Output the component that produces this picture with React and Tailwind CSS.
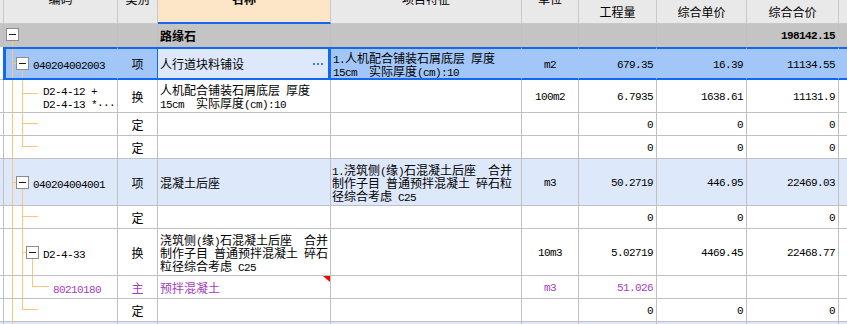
import React from 'react';

const O = '#fcc676';

function TreeArt() {
  const boxes = [
    [6.5, 28.5],
    [16.5, 57.5],
    [16.5, 176.5],
    [26.5, 246.5],
  ];
  return (
    <>
      <path
        d="M12.5 40V340 M12 63.5H16 M22.5 69V147 M22 93.5H38 M22 123.5H38 M22 146.5H38 M12 182.5H16 M22.5 188V310 M22 216.5H38 M22 252.5H26 M32.5 258V287 M32 286.5H49 M22 309.5H38"
        stroke={O}
        strokeWidth="1"
        fill="none"
      />
      {boxes.map(([x, y], i) => (
        <g key={i}>
          <rect x={x} y={y} width="12" height="12" fill="#fff" stroke="#8c8c8c" />
          <path d={`M${x + 2.5} ${y + 6}H${x + 9.5}`} stroke="#1a1a1a" />
        </g>
      ))}
    </>
  );
}

function Gutter({ x0, y0, w, h }) {
  return (
    <svg
      width={w}
      height={h}
      viewBox={`${x0} ${y0} ${w} ${h}`}
      className="block flex-none"
      shapeRendering="crispEdges"
    >
      <TreeArt />
    </svg>
  );
}

const ASCII = /^[\x20-\x7e\u00b7]+$/;
function T({ s }) {
  return s
    .split(/([\x20-\x7e\u00b7]+)/)
    .filter(Boolean)
    .map((p, i) =>
      ASCII.test(p) ? (
        <span
          key={i}
          className="font-['Liberation_Mono',monospace] text-[11px] tracking-[-0.6px] whitespace-pre"
        >
          {p}
        </span>
      ) : (
        <span key={i}>{p}</span>
      )
    );
}

function L({ lines, className = '' }) {
  return (
    <div className={className}>
      {lines.map((l, i) => (
        <div key={i} className="whitespace-nowrap h-[13px] leading-[13px]">
          <T s={l} />
        </div>
      ))}
    </div>
  );
}

const W = [
  'w-[4px]',
  'w-[114px]',
  'w-[40px]',
  'w-[173px]',
  'w-[191px]',
  'w-[57px]',
  'w-[78px]',
  'w-[90px]',
  'w-[92px]',
  'w-[40px]',
];

function Row({ h, bg = 'bg-white', cells, text = 'text-black' }) {
  return (
    <div className={`flex flex-none ${h} ${text}`}>
      {W.map((w, i) => (
        <div
          key={i}
          className={`${w} relative flex-none h-full flex items-center overflow-hidden border-r border-b border-[#c0c0c0] ${bg}`}
        >
          {cells[i]}
        </div>
      ))}
    </div>
  );
}

const C = ({ s }) => (
  <div className="w-full text-center">
    <T s={s} />
  </div>
);
const R = ({ s }) => (
  <div className="w-full text-right pr-[3px]">
    <T s={s} />
  </div>
);

function Code({ y0, h, w, lines }) {
  return (
    <>
      <Gutter x0={4} y0={y0} w={w} h={h} />
      {lines && <L lines={lines} />}
    </>
  );
}

const HC =
  'flex-none h-full border-r border-b border-[#c8c8c8] bg-[#e9e9e9] flex justify-center overflow-hidden';

function Header() {
  return (
    <div className="flex flex-none h-[24px] text-black">
      <div className={`${HC} w-[4px]`} />
      <div className={`${HC} w-[114px] items-start`}>
        <div className="-mt-[8px] leading-[13px]">编码</div>
      </div>
      <div className={`${HC} w-[40px] items-start`}>
        <div className="-mt-[8px] leading-[13px]">类别</div>
      </div>
      <div className="w-[173px] flex-none h-full border-r border-r-[#c8c8c8] border-b-2 border-b-[#1268f3] bg-[#fde6c7] flex justify-center items-start overflow-hidden">
        <div className="-mt-[8px] leading-[13px] font-bold">名称</div>
      </div>
      <div className={`${HC} w-[191px] items-start`}>
        <div className="-mt-[8px] leading-[13px]">项目特征</div>
      </div>
      <div className={`${HC} w-[57px] items-start`}>
        <div className="-mt-[8px] leading-[13px]">单位</div>
      </div>
      <div className={`${HC} w-[78px] items-center`}>
        <div className="leading-[13px]">工程量</div>
      </div>
      <div className={`${HC} w-[90px] items-center`}>
        <div className="leading-[13px]">综合单价</div>
      </div>
      <div className={`${HC} w-[92px] items-center`}>
        <div className="leading-[13px]">综合合价</div>
      </div>
      <div className={`${HC} w-[40px]`} />
    </div>
  );
}

const SELC =
  'flex-none h-full flex items-center overflow-hidden bg-[#a2c6f8] border-t-2 border-b-2 border-r border-t-[#1268f3] border-b-[#1268f3] border-r-[#a2c6f8]';

function SelectedRow() {
  return (
    <div className="flex flex-none h-[33px] text-black">
      <div className="w-[3px] flex-none h-full bg-white border-b border-[#c0c0c0]" />
      <div className="w-[115px] flex-none h-full flex items-center overflow-hidden bg-[#a2c6f8] border-t-2 border-b-2 border-l-[3px] border-r border-t-[#1268f3] border-b-[#1268f3] border-l-[#1268f3] border-r-[#a2c6f8]">
        <Gutter x0={6} y0={49} w={27} h={29} />
        <L lines={['040204002003']} />
      </div>
      <div className="w-[40px] flex-none h-full flex items-center overflow-hidden bg-[#a2c6f8] border-t-2 border-b-2 border-r border-[#1268f3]">
        <C s="项" />
      </div>
      <div className="w-[173px] flex-none h-full flex items-center overflow-hidden bg-[#dde8fb] border-t-2 border-b-2 border-r-[3px] border-[#1268f3]">
        <div className="flex w-full items-center justify-between pl-[2px] pr-[5px]">
          <L lines={['人行道块料铺设']} />
          <svg width="10" height="2" className="block">
            <rect x="0" y="0" width="2" height="2" fill="#3b82d6" />
            <rect x="4" y="0" width="2" height="2" fill="#3b82d6" />
            <rect x="8" y="0" width="2" height="2" fill="#3b82d6" />
          </svg>
        </div>
      </div>
      <div className={`${SELC} w-[191px]`}>
        <L className="pl-[2px]" lines={['1.人机配合铺装石屑底层 厚度', '15cm　实际厚度(cm):10']} />
      </div>
      <div className={`${SELC} w-[57px]`}>
        <C s="m2" />
      </div>
      <div className={`${SELC} w-[78px]`}>
        <R s="679.35" />
      </div>
      <div className={`${SELC} w-[90px]`}>
        <R s="16.39" />
      </div>
      <div className={`${SELC} w-[92px]`}>
        <R s="11134.55" />
      </div>
      <div className={`${SELC} w-[40px]`} />
    </div>
  );
}

function DingRow({ y0 }) {
  return (
    <Row
      h="h-[23px]"
      cells={[
        null,
        <Code y0={y0} h={22} w={113} />,
        <C s="定" />,
        null,
        null,
        null,
        <R s="0" />,
        <R s="0" />,
        <R s="0" />,
        null,
      ]}
    />
  );
}

export default function App() {
  return (
    <div className="w-[847px] h-[324px] overflow-hidden bg-white font-['Noto_Sans_CJK_SC',sans-serif] text-[12px] leading-[13px] flex flex-col">
      <Header />
      <Row
        h="h-[23px]"
        bg="bg-[#c4c4c4]"
        cells={[
          null,
          <Code y0={24} h={22} w={113} />,
          null,
          <div className="pl-[2px] font-bold">
            <T s="路缘石" />
          </div>,
          null,
          null,
          null,
          null,
          <div className="w-full text-right pr-[3px] font-bold">
            <T s="198142.15" />
          </div>,
          null,
        ]}
      />
      <SelectedRow />
      <Row
        h="h-[33px]"
        cells={[
          null,
          <Code y0={80} h={32} w={39} lines={['D2-4-12 +', 'D2-4-13 *···']} />,
          <C s="换" />,
          <L className="pl-[2px]" lines={['人机配合铺装石屑底层 厚度', '15cm　实际厚度(cm):10']} />,
          null,
          <C s="100m2" />,
          <R s="6.7935" />,
          <R s="1638.61" />,
          <R s="11131.9" />,
          null,
        ]}
      />
      <DingRow y0={113} />
      <DingRow y0={136} />
      <Row
        h="h-[47px]"
        bg="bg-[#dde8fb]"
        cells={[
          null,
          <Code y0={159} h={46} w={29} lines={['040204004001']} />,
          <C s="项" />,
          <L className="pl-[2px]" lines={['混凝土后座']} />,
          <L
            className="pl-[1px]"
            lines={['1.浇筑侧(缘)石混凝土后座　合并', '制作子目 普通预拌混凝土 碎石粒', '径综合考虑 C25']}
          />,
          <C s="m3" />,
          <R s="50.2719" />,
          <R s="446.95" />,
          <R s="22469.03" />,
          null,
        ]}
      />
      <DingRow y0={206} />
      <Row
        h="h-[47px]"
        cells={[
          null,
          <Code y0={229} h={46} w={39} lines={['D2-4-33']} />,
          <C s="换" />,
          <L
            className="pl-[2px]"
            lines={['浇筑侧(缘)石混凝土后座　合并', '制作子目 普通预拌混凝土 碎石', '粒径综合考虑 C25']}
          />,
          null,
          <C s="10m3" />,
          <R s="5.02719" />,
          <R s="4469.45" />,
          <R s="22468.77" />,
          null,
        ]}
      />
      <Row
        h="h-[23px]"
        text="text-[#a43cc4]"
        cells={[
          null,
          <Code y0={276} h={22} w={49} lines={['80210180']} />,
          <C s="主" />,
          <>
            <L className="pl-[2px]" lines={['预拌混凝土']} />
            <svg width="7" height="6" className="absolute top-0 right-0 block">
              <polygon points="0,0 7,0 7,6" fill="#ff0000" />
            </svg>
          </>,
          null,
          <C s="m3" />,
          <R s="51.026" />,
          null,
          null,
          null,
        ]}
      />
      <DingRow y0={299} />
      <Row
        h="h-[23px]"
        bg="bg-[#dde8fb]"
        cells={[null, <Code y0={322} h={22} w={113} />, null, null, null, null, null, null, null, null]}
      />
    </div>
  );
}
